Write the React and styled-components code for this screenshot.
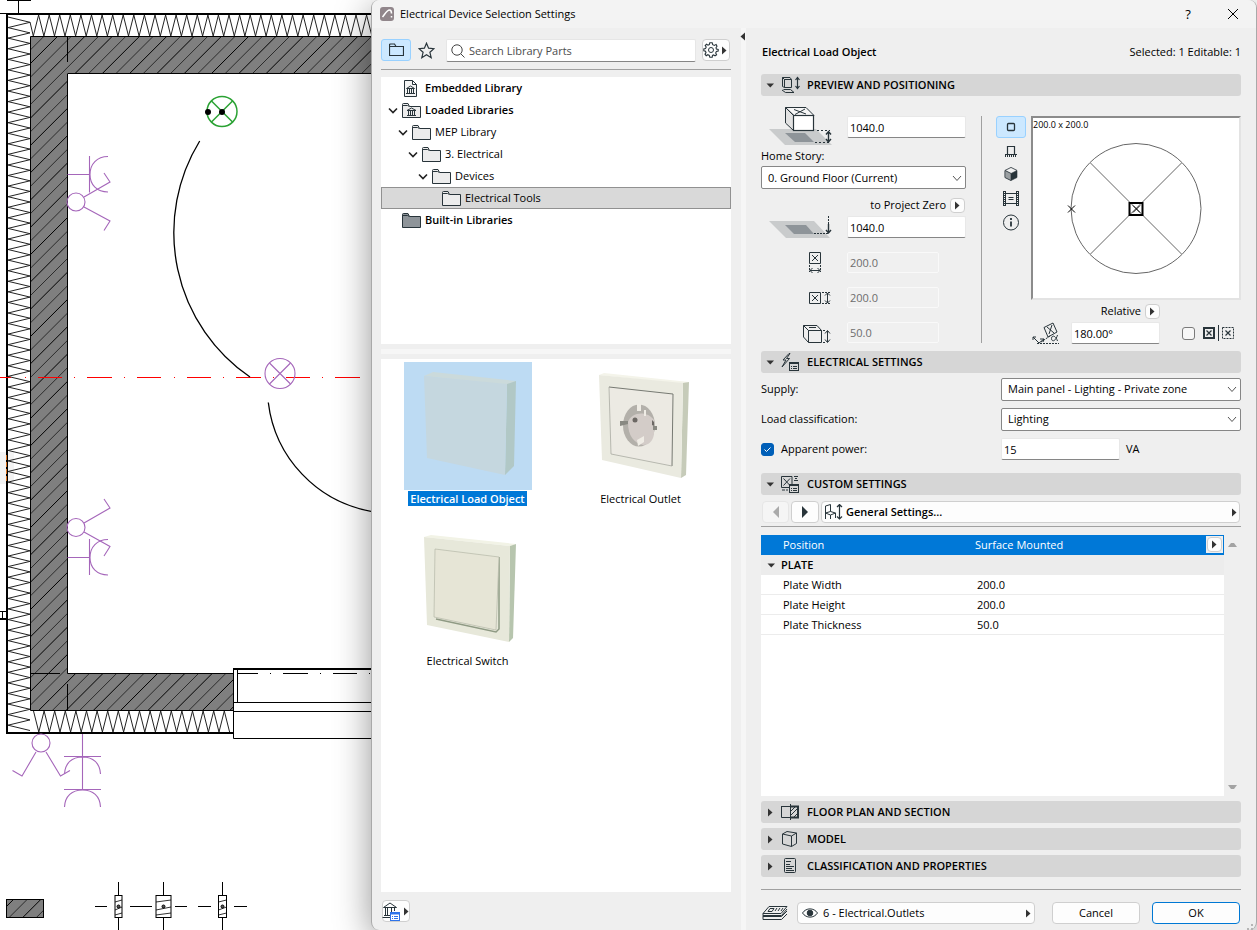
import React from "react";
import styled, { createGlobalStyle } from "styled-components";

const INK = "#28343a";
const PURPLE = "#a566ba";

const GlobalStyle = createGlobalStyle`
  *, *::before, *::after { box-sizing: border-box; }
  body {
    margin: 0;
    background: #fff;
    color: #000;
    font-family: "Open Sans", "Noto Sans", sans-serif;
    font-size: 11px;
    line-height: 16px;
  }
  button, input, select { font: inherit; color: inherit; margin: 0; }
  strong { font-weight: 600; }
  svg { display: block; flex: none; }
`;

const Page = styled.div`
  display: grid;
  grid-template-columns: minmax(0, 371fr) minmax(0, 886fr);
  height: 100vh;
  overflow: hidden;
`;

/* ---------- floor plan ---------- */

const Plan = styled.div`
  min-height: 0;
  overflow: hidden;
  & > svg { width: 100%; height: 100%; }
`;

const zigzag = (horizontal, from, to, nearEdge, farEdge, step) => {
  const points = [];
  for (let at = from, i = 0; at <= to; at += step / 2, i += 1) {
    const edge = i % 2 ? farEdge : nearEdge;
    points.push(horizontal ? `${at.toFixed(1)},${edge}` : `${edge},${at.toFixed(1)}`);
  }
  return points.join(" ");
};

const hatchLines = Array.from({ length: 80 }, (_, i) => 80.3 + i * 13.65);
const symbols = [
  { x: 118.5, half: 3.5 },
  { x: 163.5, half: 7.5 },
  { x: 222.5, half: 4 },
];

function FloorPlan() {
  return (
    <Plan>
      <svg role="img" aria-label="Floor plan" fill="none" stroke="#000">
        <defs>
          <clipPath id="concrete">
            <path d="M31 37H372V73H67V673H233V711H31ZM7 900H44V918H7Z" />
          </clipPath>
        </defs>
        <rect x="0" y="452" width="14" height="32" fill="#f3f3f3" stroke="none" />
        <path d="M7 .5H31M18.5 0V13M0 13.5H7" />
        <polyline points={zigzag(true, 33.3, 372, 36, 15, 10.58)} stroke="#222" />
        <path d="M30 22L33.3 36" stroke="#222" />
        <polyline points={zigzag(false, 17, 732, 8, 30, 10.57)} stroke="#222" />
        <polyline points={zigzag(true, 33.5, 233, 711, 732, 10.6)} stroke="#222" />
        <path d="M31 37H372V73H67V673H233V711H31ZM7 900H44V918H7Z" fill="#7f7f7f" stroke="none" />
        <g clipPath="url(#concrete)">
          {hatchLines.map((c, i) => (
            <path key={c} d={`M0 ${c}L${c} 0`} stroke={i % 2 ? "#000" : "#2c2c2c"} />
          ))}
        </g>
        <path d="M30.5 36.5H372M30.5 36.5V710.5H233M372 73.5H67.5V673.5H233M67.5 37V62M67.5 684V710M31 673.5H60" />
        <path d="M372 14H7V733H233" strokeWidth="2" />
        <path d="M6.5 455V481" stroke="#d8701c" strokeDasharray="5 2" />
        <path d="M0 611.5H6M2.5 612V618" />
        <path d="M0 619H7" strokeWidth="2" />

        <path
          d="M0 377.5H11M25 377.5H26M38 377.5H62M74 377.5H75M87 377.5H112M124 377.5H125M137 377.5H161M174 377.5H175M187 377.5H211M223 377.5H224M236 377.5H261M273 377.5H274M286 377.5H310M322 377.5H323M335 377.5H360"
          stroke="#f00"
        />

        <path d="M233 669H372" strokeWidth="2" />
        <path d="M233.5 669V738.5H372M237.5 669V702M233 702.5H372M233 711.5H372M237 673.5H258M270 673.5H271M283 673.5H308M320 673.5H321M333 673.5H357M369 673.5H370" />

        <path d="M199.7 141A175 175 0 0 0 250 377M268.3 402.5A126 126 0 0 0 372 511.5" strokeWidth="1.3" />

        <g stroke="#2aa233" strokeWidth="1.5">
          <circle cx="222" cy="111.5" r="15" />
          <path d="M211.5 101L232.5 122M232.5 101L211.5 122" />
        </g>
        <circle cx="208" cy="112" r="3" fill="#000" stroke="none" />
        <circle cx="222" cy="112" r="3" fill="#000" stroke="none" />

        <g stroke={PURPLE} strokeWidth="1.1">
          <circle cx="280" cy="373.5" r="15" />
          <path d="M269.5 363L290.5 384M290.5 363L269.5 384" />
          <path d="M67.5 174.5H89.5M89.5 156V192.5M108 156.5C97 156.5 90 164 90 174.5S97 192 108 192" />
          <circle cx="76" cy="202" r="9" />
          <path d="M84 197L110 182L104 173M84 207L110 221L104 230.5" />
          <circle cx="76" cy="527.5" r="9" />
          <path d="M84 523L110 508L104 499M84 532L110 546.5L104 556" />
          <path d="M67.5 557.5H89.5M89.5 539V575M108 539.5C97 539.5 90 547 90 557.5S97 575 108 575" />
          <circle cx="41" cy="743" r="9" />
          <path d="M36 752L22 776L12.5 770.5M46 752L60.5 776L70 770.5" />
          <path d="M82.5 734V789M64 756.5H101M64 789.5H101M64.5 774C65 763 72 757 82.5 757S100 763 100.5 774M64.5 807C65 796 72 790 82.5 790S100 796 100.5 807" />
        </g>

        <rect x="6.5" y="899.5" width="37" height="18" />
        <path d="M95 906.5H107M130 906.5H152M175 906.5H187M198 906.5H211M234 906.5H247" />
        {symbols.map(({ x, half }) => (
          <g key={x}>
            <path d={`M${x} 882V895M${x} 918V931`} />
            <rect x={x - half} y="895.5" width={half * 2} height="22" />
            <path d={`M${x - half} 902L${x + half} 900M${x - half} 910L${x + half} 907M${x - half} 915L${x + half} 913`} strokeWidth="0.8" />
            <circle cx={x} cy="906.5" r="1.5" fill="#555" />
          </g>
        ))}
      </svg>
    </Plan>
  );
}

/* ---------- icons ---------- */

const Icon = ({ w, h, children, ...rest }) => (
  <svg width={w} height={h} viewBox={`0 0 ${w} ${h}`} fill="none" stroke={INK} aria-hidden="true" {...rest}>
    {children}
  </svg>
);

const Triangle = ({ dir = "right", color = "#333" }) => {
  const shapes = {
    right: "M2 .5L6.500 4.500L2 8.500Z",
    left: "M7 .5L2.500 4.500L7 8.500Z",
    down: "M.5 2.500H8L4.300 6.500Z",
    up: "M0 7H9L6 3H3Z",
    end: "M0 2H9L6 6H3Z",
  };
  return (
    <Icon w={9} h={9} stroke="none" fill={color}>
      <path d={shapes[dir]} />
    </Icon>
  );
};

const BigTriangle = ({ left, color = INK }) => (
  <Icon w={8} h={12} stroke="none" fill={color}>
    <path d={left ? "M7 0L1 6L7 12Z" : "M1 0L7 6L1 12Z"} />
  </Icon>
);

const Chevron = ({ bold }) => (
  <Icon w={12} h={12} stroke={bold ? "#222" : "#555"} strokeWidth={bold ? 1.6 : 1}>
    <path d={bold ? "M2 4.5L6 8.5L10 4.5" : "M2 4L6 8.5L10 4"} />
  </Icon>
);

const AppIcon = () => (
  <Icon w={14} h={14}>
    <rect width="14" height="14" rx="3" fill="#91868b" stroke="none" />
    <path d="M2.5 10C5 7 7 3 9.5 3C11 3 11.5 4.5 11.5 6.5M11.5 9V10.5" stroke="#fff" strokeWidth="1.5" />
  </Icon>
);

const FolderIcon = ({ fill = "#ececec", library }) => (
  <Icon w={19} h={15}>
    <path d="M.5 3.5V1.5Q.5 .5 1.5 .5H6L7.5 3.5" fill={fill} />
    <path d="M.5 2.5H5.5L7.5 3.5H18.5V14.5H.5Z" fill={fill} />
    {library && <path d="M5 7.5L9.5 5L14 7.5ZM6.5 7.5V12M8.5 7.5V12M10.5 7.5V12M12.5 7.5V12M5 12.5H14" />}
  </Icon>
);

const LibraryFileIcon = () => (
  <Icon w={19} h={17}>
    <path d="M2.5 .5H10.5L14.5 4.5V16.5H2.5ZM10.5 .5V4.5H14.5" fill="#f4f4f4" />
    <path d="M4.5 8.5L8.5 6L12.5 8.5ZM5.5 8.5V13M7.5 8.5V13M9.5 8.5V13M11.5 8.5V13M4 13.5H13" />
  </Icon>
);

const ToolbarFolderIcon = () => (
  <Icon w={15} h={14}>
    <path d="M.5 12.5V2Q.5 1 1.5 1H5.5L7 3.5H14.5V12.5ZM.5 3.5H7" strokeWidth="1.2" />
  </Icon>
);

const StarIcon = () => (
  <Icon w={17} h={17}>
    <path d="M8.5 1.2L10.6 6.2L16 6.7L11.9 10.3L13.2 15.7L8.5 12.8L3.8 15.7L5.1 10.3L1 6.7L6.4 6.2Z" strokeWidth="1.2" />
  </Icon>
);

const SearchIcon = () => (
  <Icon w={14} h={14} stroke="#444">
    <circle cx="6" cy="6" r="5.2" />
    <path d="M9.8 9.8L13.5 13.5" />
  </Icon>
);

const GearIcon = () => (
  <Icon w={16} h={16}>
    <circle cx="8" cy="8" r="2.500" />
    <path
      d="M6.800 .8H9.200L9.700 2.700L11.400 3.400L13.100 2.400L14 4.200L13 5.800L13.400 7L15.200 7.400V9L13.400 9.400L12.700 11L13.600 12.700L12 13.800L10.500 12.900L9.500 13.400L9.200 15.200H6.800L6.300 13.400L4.800 12.700L3.200 13.700L2 12.200L3 10.600L2.500 9.300L.8 8.900V7L2.500 6.600L3.200 5L2.200 3.500L3.500 2.300L5 3.200L6.300 2.600Z"
      strokeWidth="1.100"
    />
  </Icon>
);

const LibraryManagerIcon = () => (
  <Icon w={19} h={19}>
    <path d="M1.5 5.5L8 1L14.5 5.5ZM3.5 6V13M5.5 6V13M9.5 6V10M12.5 6V9M2 13.5H8M.5 15.5H8" />
    <rect x="8.5" y="10.5" width="9" height="8" fill="#fff" stroke="#2f74ea" />
    <path d="M8 11.5H18" stroke="#2f74ea" strokeWidth="2" />
    <path d="M10 14.5H11M12 14.5H16M10 16.5H11M12 16.5H16" stroke="#2f74ea" />
  </Icon>
);

const PositioningIcon = () => (
  <Icon w={20} h={18}>
    <path d="M1.500 1.500L3.500 3.500V11.500L1.500 10.500ZM3.500 3.500H10.500V11.500H3.500ZM1.500 1.500H9L10.500 3.500M2.500 13.500H9.500L13 16.500H4.500L1 14" />
    <path d="M16.500 2V12M14.500 4L16.500 1.500L18.500 4M14.500 10L16.500 12.500L18.500 10" strokeWidth="1.200" />
  </Icon>
);

const CardLines = () => (
  <>
    <rect x="8.5" y="9.5" width="9" height="8" fill="#d6d6d6" />
    <path d="M8.5 10.5H17.5M10 13.5H11M12 13.5H16M10 15.5H11M12 15.5H16" />
  </>
);

const ElectricalIcon = () => (
  <Icon w={20} h={18}>
    <path d="M8 .5L2 7H5L1 14L8.5 5.5H5.5L9 .5Z" />
    <CardLines />
  </Icon>
);

const CustomIcon = () => (
  <Icon w={20} h={18}>
    <path d="M.5 1.5H11V12.5H.5ZM2.5 3.5L9 10.5M9 3.5L2.5 10.5M13 1.5H17M13 5.5H17M14 3.5H16M1 15H4M5 15H7" />
    <CardLines />
  </Icon>
);

const SectionIcon = () => (
  <Icon w={20} h={18}>
    <path d="M.5 3.5H9M.5 3V14.5H9M9.5 1V17" />
    <path d="M9.5 3.5H17V14.5H9.5" strokeWidth="2" />
    <path d="M10 8L14 4M10 12L17 5M13 14L17 10" />
  </Icon>
);

const ModelIcon = () => (
  <Icon w={20} h={18}>
    <path d="M1.5 4L6 1.5L15.5 3V13.5L10.5 16.5L1.5 14ZM1.5 4L10.5 6V16.5M10.5 6L15.5 3" />
  </Icon>
);

const ClassificationIcon = () => (
  <Icon w={20} h={18}>
    <rect x="3.5" y="1.5" width="11" height="14" rx="1" />
    <path d="M5 4.5H10M5 7.5H9M5 9.5H13M5 11.5H11M5 13.5H13" />
  </Icon>
);

const HeightAboveIcon = () => (
  <Icon w={64} h={40}>
    <path d="M0 22H47L63 38H16Z" fill="#c9cbcc" stroke="none" />
    <path d="M16 26H36L45 35H26Z" fill="#8e9499" stroke="none" />
    <path d="M16.5 .5H37L45 8.5H25Z" fill="#f6f6f6" />
    <path d="M16.5 .5L24.5 8.5V23.5L16.5 16Z" fill="#e2e2e2" />
    <rect x="24.5" y="8.5" width="20" height="15" fill="#fff" strokeWidth="1.2" />
    <path d="M25 2.500L37 7M36 2L26 7.500" />
    <path d="M48 23.5H61M46 35.5H61" strokeDasharray="2 2" />
    <path d="M59.5 25V34M57 27.5L59.5 24.5L62 27.5M57 32L59.5 35L62 32" strokeWidth="1.4" />
  </Icon>
);

const HeightZeroIcon = () => (
  <Icon w={64} h={23}>
    <path d="M0 5H45L61 22H17Z" fill="#c9cbcc" stroke="none" />
    <path d="M16 9H37L45 18H25Z" fill="#8e9499" stroke="none" />
    <path d="M45 17.5H59" strokeDasharray="2 1" />
    <path d="M59.5 0V8" strokeDasharray="2 1" />
    <path d="M59.5 8V17M57 14L59.5 17L62 14" strokeWidth="1.4" />
  </Icon>
);

const WidthIcon = () => (
  <Icon w={28} h={22}>
    <path d="M6.5 .5H17.5V11.5H6.5ZM9 3L15 9M15 3L9 9M7 18.5H17M9.5 16L7 18.5L9.5 21M14.5 16L17 18.5L14.5 21" />
    <path d="M6.5 13V20M17.5 13V20" strokeDasharray="2 1" />
  </Icon>
);

const DepthIcon = () => (
  <Icon w={28} h={22}>
    <path d="M6.5 5.5H17.5V16.5H6.5ZM9 8L15 14M15 8L9 14M24.5 6V16M22 8.5L24.5 6L27 8.5M22 13.5L24.5 16L27 13.5" />
    <path d="M19 5.5H27M19 16.5H27" strokeDasharray="2 1" />
  </Icon>
);

const ThicknessIcon = () => (
  <Icon w={28} h={22}>
    <path d="M.5 3.5H14L18.5 8.5H5.5ZM.5 3.5V15L5.5 20.5M5.5 8.5H18.5V20.5H5.5ZM6 5.5H13M24.5 9V20M22 11.5L24.5 8.5L27 11.5M22 17.5L24.5 20.5L27 17.5" />
    <path d="M20 8.5H22M20 20.5H22" />
  </Icon>
);

const AngleIcon = () => (
  <Icon w={28} h={22}>
    <path d="M12 5.5L21 1L25 10L16 15ZM15 5L22 11M20 3L17 12M1 15L7 21L12 17M1 15V18M1 15H4M12 17L8 17M12 17L11 20" />
    <path d="M5 21.5H27M9 20L18 14" strokeDasharray="2 1" />
    <path d="M25.5 13C23.5 20 19.5 20 19.5 16.5S23.5 13 25.5 19" />
  </Icon>
);

const ViewPlanIcon = () => (
  <Icon w={16} h={16}>
    <rect x="4.5" y="4.5" width="7" height="7" rx="1" strokeWidth="1.3" />
  </Icon>
);
const ViewElevationIcon = () => (
  <Icon w={16} h={16}>
    <path d="M4.5 11V3.5H11.5V11M2 11.5H14" strokeWidth="1.2" />
    <path d="M2 13H14" strokeWidth="2" strokeDasharray="1 1" />
  </Icon>
);
const ViewModelIcon = () => (
  <Icon w={16} h={16} strokeWidth="0.6">
    <path d="M8 .5L14 3.5V10.5L8 13.5L2 10.5V3.5Z" fill="#28343a" />
    <path d="M8 .5L14 3.5L8 6.5L2 3.5Z" fill="#f1f1f1" />
    <path d="M2 3.5L8 6.5V13.5L2 10.5Z" fill="#9a9fa2" />
  </Icon>
);
const ViewFilmIcon = () => (
  <Icon w={18} h={16}>
    <path d="M4 2.5H14M4 12.5H14M3.5 0V15M14.500 0V15M1.500 0V15M16.500 0V15M6.500 6.500H11.500M6.500 8.500H11.500" />
    <path d="M2.500 0V15M15.500 0V15" strokeDasharray="1 1" />
  </Icon>
);
const ViewInfoIcon = () => (
  <Icon w={18} h={18}>
    <circle cx="9" cy="8.5" r="7.5" />
    <path d="M9 7.5V12.5M9 4V6" strokeWidth="1.8" />
  </Icon>
);

const AnchorSolidIcon = () => (
  <Icon w={12} h={12}>
    <rect x="1" y="1" width="10" height="10" strokeWidth="2" />
    <path d="M3.5 3.5L8.5 8.5M8.5 3.5L3.5 8.5" strokeWidth="1.2" />
  </Icon>
);
const AnchorDashedIcon = () => (
  <Icon w={17} h={16}>
    <path d="M.5 0V16" />
    <rect x="4.5" y="2.5" width="11" height="11" strokeDasharray="2 1" />
    <path d="M7.5 5.5L12.5 10.5M12.5 5.5L7.5 10.5" strokeWidth="1.2" />
  </Icon>
);

const ChairIcon = () => (
  <Icon w={19} h={16}>
    <path d="M1.5 15V2L6.5 .5V7.5L1.5 9M6.5 7.5L11.5 9L6.5 11L1.5 9M6.5 11V15M11.5 9V14" />
    <path d="M15.5 1V14M13 3L15.5 .5L18 3M13 12.5L15.5 15L18 12.5" strokeWidth="1.2" />
  </Icon>
);

const LayersIcon = () => (
  <Icon w={26} h={16}>
    <path d="M7 1.5H25L19 8.5H1ZM1 8.5V10.5H19.5L25 4M1 11.5H19.5L25 6M1 14.5H19.5L25 9M1 10.5V14.5" />
    <path d="M8 3.5H12L10 6.5H6ZM15 3L13 6M18 3L16 6M21 3L19 6" />
  </Icon>
);

const EyeIcon = () => (
  <Icon w={16} h={12}>
    <path d="M.5 6C4 .5 12 .5 15.5 6C12 11.5 4 11.5 .5 6Z" />
    <circle cx="8" cy="6" r="2.8" fill={INK} />
  </Icon>
);

/* ---------- device thumbnails ---------- */

const LoadObjectArt = () => (
  <svg width="128" height="128" viewBox="0 0 128 128" aria-hidden="true">
    <path d="M20 14L29 10L112 19L103 23Z" fill="#cbdadb" />
    <path d="M103 22L112 19L110 104L101 113Z" fill="#b1c8c6" />
    <path d="M20 14L103 22L101 113L23 96Z" fill="#c5d7df" />
  </svg>
);

const OutletArt = () => (
  <svg width="128" height="128" viewBox="0 0 128 128" aria-hidden="true">
    <path d="M22 13L27 11L112 20L106 22Z" fill="#f4f4ea" />
    <path d="M106 21L112 20L109 113L104 116Z" fill="#c6cbb9" />
    <path d="M22 13L106 21L104 116L25 98Z" fill="#eaeae0" />
    <path d="M32 25L96 32L95 104L34 92Z" fill="#eceae3" />
    <path d="M32 25L96 32L95 104" fill="none" stroke="#777a73" />
    <path d="M32 25L34 92L95 104" fill="none" stroke="#a9aba2" strokeWidth="0.8" />
    <ellipse cx="62" cy="63.5" rx="16" ry="21" fill="#b3b0aa" />
    <path d="M51 60C54 50 70 48 77 58V72C76 80 71 83 66 83C57 81 51 74 51 60Z" fill="#d3ccc8" />
    <path d="M43 59H51V62L43 64ZM76 64H80V68H76Z" fill="#898982" />
    <path d="M60 42H64V49H60ZM67 48H69V54H67ZM60 78L67 74V80L61 84Z" fill="#efece5" />
    <circle cx="58" cy="58" r="2.5" fill="#6c6864" />
    <path d="M75 58L77 60V64L75 63Z" fill="#6c6864" />
  </svg>
);

const SwitchArt = () => (
  <svg width="128" height="128" viewBox="0 0 128 128" aria-hidden="true">
    <path d="M20 13L27 11L112 20L106 22Z" fill="#f2f3e6" />
    <path d="M106 22L112 20L109 114L105 118Z" fill="#b7c5ae" />
    <path d="M20 13L106 22L105 118L23 101Z" fill="#e7e8da" />
    <path d="M32 95L92 108L95 105V33" fill="none" stroke="#8f9a84" strokeWidth="1.5" />
    <path d="M31 25L95 33L92 106L30 93Z" fill="#e6e5d6" stroke="#b4b8a7" strokeWidth="0.7" />
  </svg>
);

/* ---------- dialog ---------- */

const Dialog = styled.section`
  position: relative;
  display: flex;
  flex-direction: column;
  min-height: 0;
  background: #efefef;
  border: solid #a9a9a9;
  border-width: 0 1px;
  border-radius: 8px;
  box-shadow: 0 8px 36px rgba(0, 0, 0, 0.42);
`;

const TitleBar = styled.header`
  display: flex;
  align-items: center;
  flex: none;
  gap: 6px;
  height: 28px;
  padding: 0 15px 0 8px;
  background: #f3f3f3;
  border-radius: 8px 8px 0 0;
`;

const Title = styled.h1`
  flex: 1;
  margin: 0;
  font-size: 11px;
  font-weight: 400;
`;

const WindowButton = styled.button`
  display: grid;
  place-items: center;
  width: 16px;
  height: 20px;
  margin-left: 23px;
  padding: 0;
  border: 0;
  background: none;
  font-size: 13px;
`;

const Body = styled.div`
  display: grid;
  grid-template-columns: minmax(0, 369fr) 5px minmax(0, 510fr);
  grid-template-rows: minmax(0, 1fr);
  flex: 1;
  min-height: 0;
`;

const Splitter = styled.div`
  padding-top: 4px;
  background: #f6f6f6;
  & > svg { margin-left: -3px; }
`;

const Browser = styled.div`
  display: flex;
  flex-direction: column;
  min-height: 0;
  padding: 11px 10px 8px 9px;
`;

const BrowserTools = styled.div`
  display: flex;
  align-items: flex-start;
  gap: 6px;
  padding: 0 1px 7px 0;
  border-bottom: 1px solid #a0a0a0;
`;

const ModeButton = styled.button`
  display: grid;
  place-items: center;
  flex: none;
  width: ${(p) => p.$width || 30}px;
  height: 22px;
  padding: 0;
  border: 1px solid ${(p) => (p.$active ? "#99d1ff" : "transparent")};
  border-radius: 3px;
  background: ${(p) => (p.$active ? "#cce8ff" : "none")};
`;

const SearchBox = styled.label`
  display: flex;
  align-items: center;
  flex: 1;
  gap: 4px;
  height: 23px;
  margin-left: 6px;
  padding-left: 4px;
  background: #fff;
  border: 1px solid #e6e6e6;
  border-bottom-color: #868686;
  border-radius: 2px;
`;

const SearchInput = styled.input`
  flex: 1;
  min-width: 0;
  padding: 0;
  border: 0;
  outline: 0;
  background: none;
  &::placeholder { color: #4c4c4c; opacity: 1; }
`;

const PushButton = styled.button`
  display: flex;
  align-items: center;
  justify-content: center;
  flex: none;
  gap: 1px;
  width: ${(p) => p.$width}px;
  height: ${(p) => p.$height || 22}px;
  padding: 0;
  border: 1px solid ${(p) => (p.$primary ? "#0078d4" : p.disabled ? "#e6e6e6" : "#cfcfcf")};
  border-radius: 4px;
  background: ${(p) => (p.disabled ? "#f5f5f5" : "#fdfdfd")};
`;

const Tree = styled.ul`
  flex: none;
  height: 267px;
  margin: 7px 0 0;
  padding: 0;
  list-style: none;
  background: #fff;
`;

const TreeRow = styled.li`
  display: flex;
  align-items: center;
  height: 22px;
  padding-left: ${(p) => 6 + p.$level * 10}px;
  font-weight: ${(p) => (p.$bold ? 600 : 400)};
  background: ${(p) => (p.$selected ? "#d9d9d9" : "none")};
  box-shadow: ${(p) => (p.$selected ? "inset 0 0 0 1px #919191" : "none")};
`;

const Twisty = styled.span`
  width: 15px;
`;

const TreeLabel = styled.span`
  margin-left: 4px;
`;

const HandleBar = styled.div`
  flex: none;
  height: 5px;
  margin: 5px 0;
  background: #f6f6f6;
`;

const DeviceGrid = styled.ul`
  display: grid;
  grid-template-columns: repeat(2, 173px);
  grid-auto-rows: 162px;
  flex: 1;
  min-height: 0;
  margin: 0;
  padding: 3px 0;
  list-style: none;
  background: #fff;
  overflow: hidden;
`;

const Device = styled.li`
  display: flex;
  flex-direction: column;
  align-items: center;
  gap: 1px;
`;

const DeviceImage = styled.div`
  background: ${(p) => (p.$selected ? "#bddbf3" : "none")};
`;

const DeviceName = styled.span`
  padding: 0 2px;
  line-height: 15px;
  color: ${(p) => (p.$selected ? "#fff" : "#000")};
  background: ${(p) => (p.$selected ? "#0078d7" : "none")};
  font-weight: ${(p) => (p.$selected ? 600 : 400)};
`;

const BrowserFooter = styled.div`
  flex: none;
  padding: 8px 1px 0;
`;

const Settings = styled.form`
  display: flex;
  flex-direction: column;
  min-width: 0;
  min-height: 0;
  padding: 12px 15px 6px;
`;

const Summary = styled.div`
  display: flex;
  align-items: center;
  justify-content: space-between;
  height: 24px;
  margin-bottom: 10px;
  padding-left: 1px;
`;

const SectionHead = styled.button`
  display: flex;
  align-items: center;
  flex: none;
  width: 100%;
  height: 22px;
  margin-top: ${(p) => p.$gap || 0}px;
  padding: 0 5px;
  border: 0;
  border-radius: 3px;
  background: #d6d6d6;
  font-weight: 600;
  text-align: left;
  & > svg + svg { margin: 0 6px; }
`;

const Positioning = styled.div`
  display: grid;
  grid-template-columns: 205px 30px minmax(0, 1fr);
  height: 255px;
`;

const HeightColumn = styled.div`
  display: flex;
  flex-direction: column;
  padding-top: 11px;
`;

const FieldRow = styled.div`
  display: flex;
  align-items: center;
  justify-content: flex-end;
  flex: none;
  height: ${(p) => p.$height}px;
  margin-top: ${(p) => p.$gap || 0}px;
  padding-right: ${(p) => p.$inset || 0}px;
`;

const IconCell = styled.span`
  display: flex;
  flex: none;
  justify-content: ${(p) => (p.$end ? "flex-end" : "flex-start")};
  width: 70px;
  margin-right: ${(p) => p.$after}px;
`;

const TextField = styled.input`
  flex: none;
  width: ${(p) => p.$width}px;
  height: 22px;
  padding: 0 2px;
  border: 1px solid #e8e8e8;
  border-bottom-color: #868686;
  border-radius: 2px;
  background: #fff;
  color: #000;
  &:disabled {
    height: 21px;
    border-color: #f9f9f9;
    background: #f0f0f0;
    color: #6d6d6d;
  }
`;

const StoryLabel = styled.label`
  height: 19px;
  line-height: 18px;
`;

const SelectBox = styled.div`
  display: grid;
  align-items: center;
  flex: none;
  width: ${(p) => p.$width}px;
  & > * { grid-area: 1 / 1; }
  & > svg { justify-self: end; margin-right: 3px; pointer-events: none; }
`;

const Select = styled.select`
  width: 100%;
  height: 23px;
  padding: 0 6px;
  border: 1px solid #868686;
  border-radius: 2px;
  background: #fff;
  appearance: none;
`;

const ZeroLabel = styled.span`
  margin-right: 4px;
`;

const Divider = styled.div`
  justify-self: center;
  width: 1px;
  margin: 20px 0 8px;
  background: #a0a0a0;
`;

const PreviewColumn = styled.div`
  display: grid;
  grid-template-columns: 30px minmax(0, 1fr);
  grid-template-rows: 184px 1fr;
  column-gap: 5px;
  padding-top: 20px;
`;

const ViewModes = styled.div`
  display: flex;
  flex-direction: column;
  gap: 2px;
`;

const PreviewPane = styled.div`
  display: grid;
  background: #fff;
  border: 2px solid;
  border-color: #8b8b8b #e3e3e3 #e3e3e3 #8b8b8b;
  overflow: hidden;
  & > * { grid-area: 1 / 1; }
  & > svg { width: 100%; height: 100%; }
`;

const PreviewSize = styled.span`
  font-size: 9px;
  line-height: 13px;
`;

const PreviewFooter = styled.div`
  grid-column: 1 / -1;
`;

const AngleRow = styled.div`
  display: flex;
  align-items: center;
  height: 22px;
  padding-left: 36px;
  & > input[type="text"] { margin: 0 22px 0 11px; }
  & > svg + svg { margin-left: 3px; }
`;

const CheckBox = styled.input`
  flex: none;
  width: 13px;
  height: 13px;
  margin: 0 8px 0 0;
  border: 1px solid #7a7a7a;
  border-radius: 3px;
  background: #f7f7f7;
  appearance: none;
  &:checked {
    border-color: #005fb8;
    background: #005fb8;
  }
`;

const CheckMark = styled.span`
  display: grid;
  align-items: center;
  width: 20px;
  & > * { grid-area: 1 / 1; }
  & > svg { pointer-events: none; }
`;

const ElectricalFields = styled.div`
  padding: 1px 0 9px;
`;

const SettingRow = styled.div`
  display: grid;
  grid-template-columns: minmax(0, 1fr) 240px;
  align-items: center;
  height: 30px;
`;

const CheckLabel = styled.label`
  display: flex;
  align-items: center;
`;

const UnitField = styled.div`
  display: flex;
  align-items: center;
  gap: 6px;
`;

const PageNav = styled.div`
  display: flex;
  align-items: center;
  flex: none;
  gap: 2px;
  margin-top: 6px;
  padding: 0 1px 3px;
  border-bottom: 1px solid #a0a0a0;
`;

const PageButton = styled(PushButton)`
  flex: 1;
  justify-content: flex-start;
  gap: 3px;
  padding: 0 0 0 2px;
  font-weight: 600;
  & > svg:last-child { margin-left: auto; }
`;

const Parameters = styled.div`
  display: flex;
  flex: 1;
  min-height: 0;
  margin: 8px 0 5px;
`;

const ParameterSheet = styled.div`
  flex: 1;
  background: #fff;
  overflow: hidden;
`;

const ParameterTable = styled.table`
  width: 100%;
  table-layout: fixed;
  border-spacing: 0;
`;

const ParameterRow = styled.tr`
  height: 20px;
  color: ${(p) => (p.$selected ? "#fff" : "#000")};
  background: ${(p) => (p.$selected ? "#0078d7" : "#fff")};
`;

const NameCell = styled.th`
  width: 214px;
  padding: 0 0 0 22px;
  border-bottom: 1px solid ${(p) => (p.$plain ? "transparent" : "#ececec")};
  font-weight: 400;
  text-align: left;
  white-space: nowrap;
`;

const ValueCell = styled.td`
  padding: 0 1px 0 ${(p) => (p.$plain ? 0 : 2)}px;
  border-bottom: 1px solid ${(p) => (p.$plain ? "transparent" : "#ececec")};
`;

const ValueWithButton = styled.span`
  display: flex;
  align-items: center;
  justify-content: space-between;
`;

const ButtonFrame = styled.span`
  padding: 1px;
  background: #efefef;
`;

const GroupCell = styled.th`
  padding: 0 6px;
  background: #ececec;
  font-weight: 600;
  text-align: left;
  & > span { display: flex; align-items: center; gap: 5px; }
`;

const ScrollBar = styled.div`
  display: flex;
  flex-direction: column;
  align-items: center;
  justify-content: space-between;
  flex: none;
  width: 17px;
  padding: 5px 0 4px;
`;

const Footer = styled.footer`
  display: flex;
  align-items: center;
  flex: none;
  gap: 12px;
  margin-top: 12px;
  padding: 12px 1px 0;
  border-top: 1px solid #a0a0a0;
`;

const LayerPicker = styled(PushButton)`
  flex: 1;
  justify-content: flex-start;
  gap: 5px;
  margin: 0 5px 0 -3px;
  padding: 0 1px 0 4px;
  & > svg:last-child { margin-left: auto; }
`;

const Grip = styled.svg`
  position: absolute;
  right: 3px;
  bottom: 0;
`;

const tree = [
  { label: "Embedded Library", level: 0, bold: true, icon: <LibraryFileIcon /> },
  { label: "Loaded Libraries", level: 0, bold: true, open: true, icon: <FolderIcon library /> },
  { label: "MEP Library", level: 1, open: true, icon: <FolderIcon /> },
  { label: "3. Electrical", level: 2, open: true, icon: <FolderIcon /> },
  { label: "Devices", level: 3, open: true, icon: <FolderIcon /> },
  { label: "Electrical Tools", level: 4, selected: true, icon: <FolderIcon /> },
  { label: "Built-in Libraries", level: 0, bold: true, icon: <FolderIcon fill="#8e9499" /> },
];

const devices = [
  { name: "Electrical Load Object", art: <LoadObjectArt />, selected: true },
  { name: "Electrical Outlet", art: <OutletArt /> },
  { name: "Electrical Switch", art: <SwitchArt /> },
];

const dimensions = [
  { name: "Width", value: "200.0", icon: <WidthIcon /> },
  { name: "Depth", value: "200.0", icon: <DepthIcon /> },
  { name: "Thickness", value: "50.0", icon: <ThicknessIcon /> },
];

const viewModes = [
  { name: "2D symbol", icon: <ViewPlanIcon />, active: true },
  { name: "Elevation", icon: <ViewElevationIcon /> },
  { name: "3D view", icon: <ViewModelIcon /> },
  { name: "Preview picture", icon: <ViewFilmIcon /> },
  { name: "Information", icon: <ViewInfoIcon /> },
];

const plateRows = [
  ["Plate Width", "200.0"],
  ["Plate Height", "200.0"],
  ["Plate Thickness", "50.0"],
];

const Section = ({ title, icon, open, gap }) => (
  <SectionHead type="button" aria-expanded={!!open} $gap={gap}>
    <Triangle dir={open ? "down" : "right"} />
    {icon}
    {title}
  </SectionHead>
);

const Dropdown = ({ id, width, value, label }) => (
  <SelectBox $width={width}>
    <Select id={id} aria-label={label} defaultValue={value}>
      <option>{value}</option>
    </Select>
    <Chevron />
  </SelectBox>
);

const LibraryBrowser = () => (
  <Browser>
    <BrowserTools>
      <ModeButton $active aria-label="Folder view"><ToolbarFolderIcon /></ModeButton>
      <ModeButton $width={17} aria-label="Favorites"><StarIcon /></ModeButton>
      <SearchBox>
        <SearchIcon />
        <SearchInput type="text" aria-label="Search" placeholder="Search Library Parts" />
      </SearchBox>
      <PushButton $width={28} aria-label="Options"><GearIcon /><Triangle /></PushButton>
    </BrowserTools>
    <Tree>
      {tree.map((n) => (
        <TreeRow key={n.label} $level={n.level} $bold={n.bold} $selected={n.selected}>
          <Twisty>{n.open && <Chevron bold />}</Twisty>
          {n.icon}
          <TreeLabel>{n.label}</TreeLabel>
        </TreeRow>
      ))}
    </Tree>
    <HandleBar />
    <DeviceGrid>
      {devices.map((d) => (
        <Device key={d.name}>
          <DeviceImage $selected={d.selected}>{d.art}</DeviceImage>
          <DeviceName $selected={d.selected}>{d.name}</DeviceName>
        </Device>
      ))}
    </DeviceGrid>
    <BrowserFooter>
      <PushButton $width={28} aria-label="Library manager"><LibraryManagerIcon /><Triangle /></PushButton>
    </BrowserFooter>
  </Browser>
);

const PositioningSection = () => (
  <Positioning>
    <HeightColumn>
      <FieldRow $height={40}>
        <IconCell $after={8}><HeightAboveIcon /></IconCell>
        <TextField type="text" aria-label="Height above story" defaultValue="1040.0" $width={119} />
      </FieldRow>
      <StoryLabel htmlFor="story">Home Story:</StoryLabel>
      <Dropdown id="story" width={205} value="0. Ground Floor (Current)" />
      <FieldRow $height={18} $gap={7} $inset={1}>
        <ZeroLabel>to Project Zero</ZeroLabel>
        <PushButton type="button" $width={15} $height={15} aria-label="Reference level"><Triangle /></PushButton>
      </FieldRow>
      <FieldRow $height={22} $gap={2}>
        <IconCell $after={8}><HeightZeroIcon /></IconCell>
        <TextField type="text" aria-label="Height to project zero" defaultValue="1040.0" $width={119} />
      </FieldRow>
      {dimensions.map((d) => (
        <FieldRow key={d.name} $height={21} $gap={14} $inset={27}>
          <IconCell $end $after={16}>{d.icon}</IconCell>
          <TextField type="text" aria-label={d.name} defaultValue={d.value} $width={92} disabled />
        </FieldRow>
      ))}
    </HeightColumn>
    <Divider />
    <PreviewColumn>
      <ViewModes>
        {viewModes.map((m) => (
          <ModeButton key={m.name} type="button" $active={m.active} aria-label={m.name}>{m.icon}</ModeButton>
        ))}
      </ViewModes>
      <PreviewPane>
        <svg viewBox="0 0 205 180" fill="none" stroke="#666" aria-hidden="true">
          <circle cx="102.5" cy="90.5" r="65" />
          <path d="M57 45L148 136M148 45L57 136" />
          <path d="M34.5 87.5L41.5 94.5M41.5 87.5L34.5 94.5M99.5 87.5L106.5 94.5M106.5 87.5L99.5 94.5" stroke="#000" />
          <rect x="96" y="85" width="13" height="12" stroke="#000" strokeWidth="2" />
        </svg>
        <PreviewSize>200.0 x 200.0</PreviewSize>
      </PreviewPane>
      <PreviewFooter>
        <FieldRow $height={22} $inset={81}>
          <ZeroLabel>Relative</ZeroLabel>
          <PushButton type="button" $width={15} $height={15} aria-label="Angle mode"><Triangle /></PushButton>
        </FieldRow>
        <AngleRow>
          <AngleIcon />
          <TextField type="text" aria-label="Rotation angle" defaultValue="180.00°" $width={89} />
          <CheckBox type="checkbox" aria-label="Mirror" />
          <AnchorSolidIcon />
          <AnchorDashedIcon />
        </AngleRow>
      </PreviewFooter>
    </PreviewColumn>
  </Positioning>
);

const ElectricalSection = () => (
  <ElectricalFields>
    <SettingRow>
      <label htmlFor="supply">Supply:</label>
      <Dropdown id="supply" width={240} value="Main panel - Lighting - Private zone" />
    </SettingRow>
    <SettingRow>
      <label htmlFor="load">Load classification:</label>
      <Dropdown id="load" width={240} value="Lighting" />
    </SettingRow>
    <SettingRow>
      <CheckLabel>
        <CheckMark>
          <CheckBox type="checkbox" defaultChecked />
          <Icon w={13} h={13} stroke="#fff"><path d="M3.5 6.5L5.5 8.5L9.5 4.5" /></Icon>
        </CheckMark>
        Apparent power:
      </CheckLabel>
      <UnitField>
        <TextField type="text" aria-label="Apparent power" defaultValue="15" $width={119} />
        VA
      </UnitField>
    </SettingRow>
  </ElectricalFields>
);

const CustomSection = () => (
  <>
    <PageNav>
      <PushButton type="button" $width={27} disabled aria-label="Previous page"><BigTriangle left color="#aaa" /></PushButton>
      <PushButton type="button" $width={28} aria-label="Next page"><BigTriangle /></PushButton>
      <PageButton type="button"><ChairIcon />General Settings...<Triangle /></PageButton>
    </PageNav>
    <Parameters>
      <ParameterSheet>
        <ParameterTable>
          <tbody>
            <ParameterRow $selected>
              <NameCell scope="row" $plain>Position</NameCell>
              <ValueCell $plain>
                <ValueWithButton>
                  Surface Mounted
                  <ButtonFrame>
                    <PushButton type="button" $width={15} $height={15} aria-label="Choose position"><Triangle /></PushButton>
                  </ButtonFrame>
                </ValueWithButton>
              </ValueCell>
            </ParameterRow>
            <ParameterRow>
              <GroupCell colSpan={2}><span><Triangle dir="down" />PLATE</span></GroupCell>
            </ParameterRow>
            {plateRows.map(([name, value]) => (
              <ParameterRow key={name}>
                <NameCell scope="row">{name}</NameCell>
                <ValueCell>{value}</ValueCell>
              </ParameterRow>
            ))}
          </tbody>
        </ParameterTable>
      </ParameterSheet>
      <ScrollBar><Triangle dir="up" color="#a3a3a3" /><Triangle dir="end" color="#a3a3a3" /></ScrollBar>
    </Parameters>
  </>
);

export default function App() {
  return (
    <Page>
      <GlobalStyle />
      <FloorPlan />
      <Dialog role="dialog" aria-labelledby="dialog-title">
        <TitleBar>
          <AppIcon />
          <Title id="dialog-title">Electrical Device Selection Settings</Title>
          <WindowButton aria-label="Help">?</WindowButton>
          <WindowButton aria-label="Close">
            <Icon w={12} h={12} stroke="#000"><path d="M1 1L11 11M11 1L1 11" /></Icon>
          </WindowButton>
        </TitleBar>
        <Body>
          <LibraryBrowser />
          <Splitter><Triangle dir="left" /></Splitter>
          <Settings onSubmit={(e) => e.preventDefault()}>
            <Summary>
              <strong>Electrical Load Object</strong>
              <span>Selected: 1 Editable: 1</span>
            </Summary>
            <Section title="PREVIEW AND POSITIONING" icon={<PositioningIcon />} open />
            <PositioningSection />
            <Section title="ELECTRICAL SETTINGS" icon={<ElectricalIcon />} open />
            <ElectricalSection />
            <Section title="CUSTOM SETTINGS" icon={<CustomIcon />} open />
            <CustomSection />
            <Section title="FLOOR PLAN AND SECTION" icon={<SectionIcon />} />
            <Section title="MODEL" icon={<ModelIcon />} gap={5} />
            <Section title="CLASSIFICATION AND PROPERTIES" icon={<ClassificationIcon />} gap={5} />
            <Footer>
              <LayersIcon />
              <LayerPicker type="button"><EyeIcon />6 - Electrical.Outlets<Triangle /></LayerPicker>
              <PushButton type="button" $width={88}>Cancel</PushButton>
              <PushButton type="submit" $width={88} $primary>OK</PushButton>
            </Footer>
          </Settings>
        </Body>
        <Grip width="6" height="6" fill="#b5b5b5" aria-hidden="true">
          <path d="M4 0H6V2H4ZM0 4H2V6H0ZM4 4H6V6H4Z" />
        </Grip>
      </Dialog>
    </Page>
  );
}
